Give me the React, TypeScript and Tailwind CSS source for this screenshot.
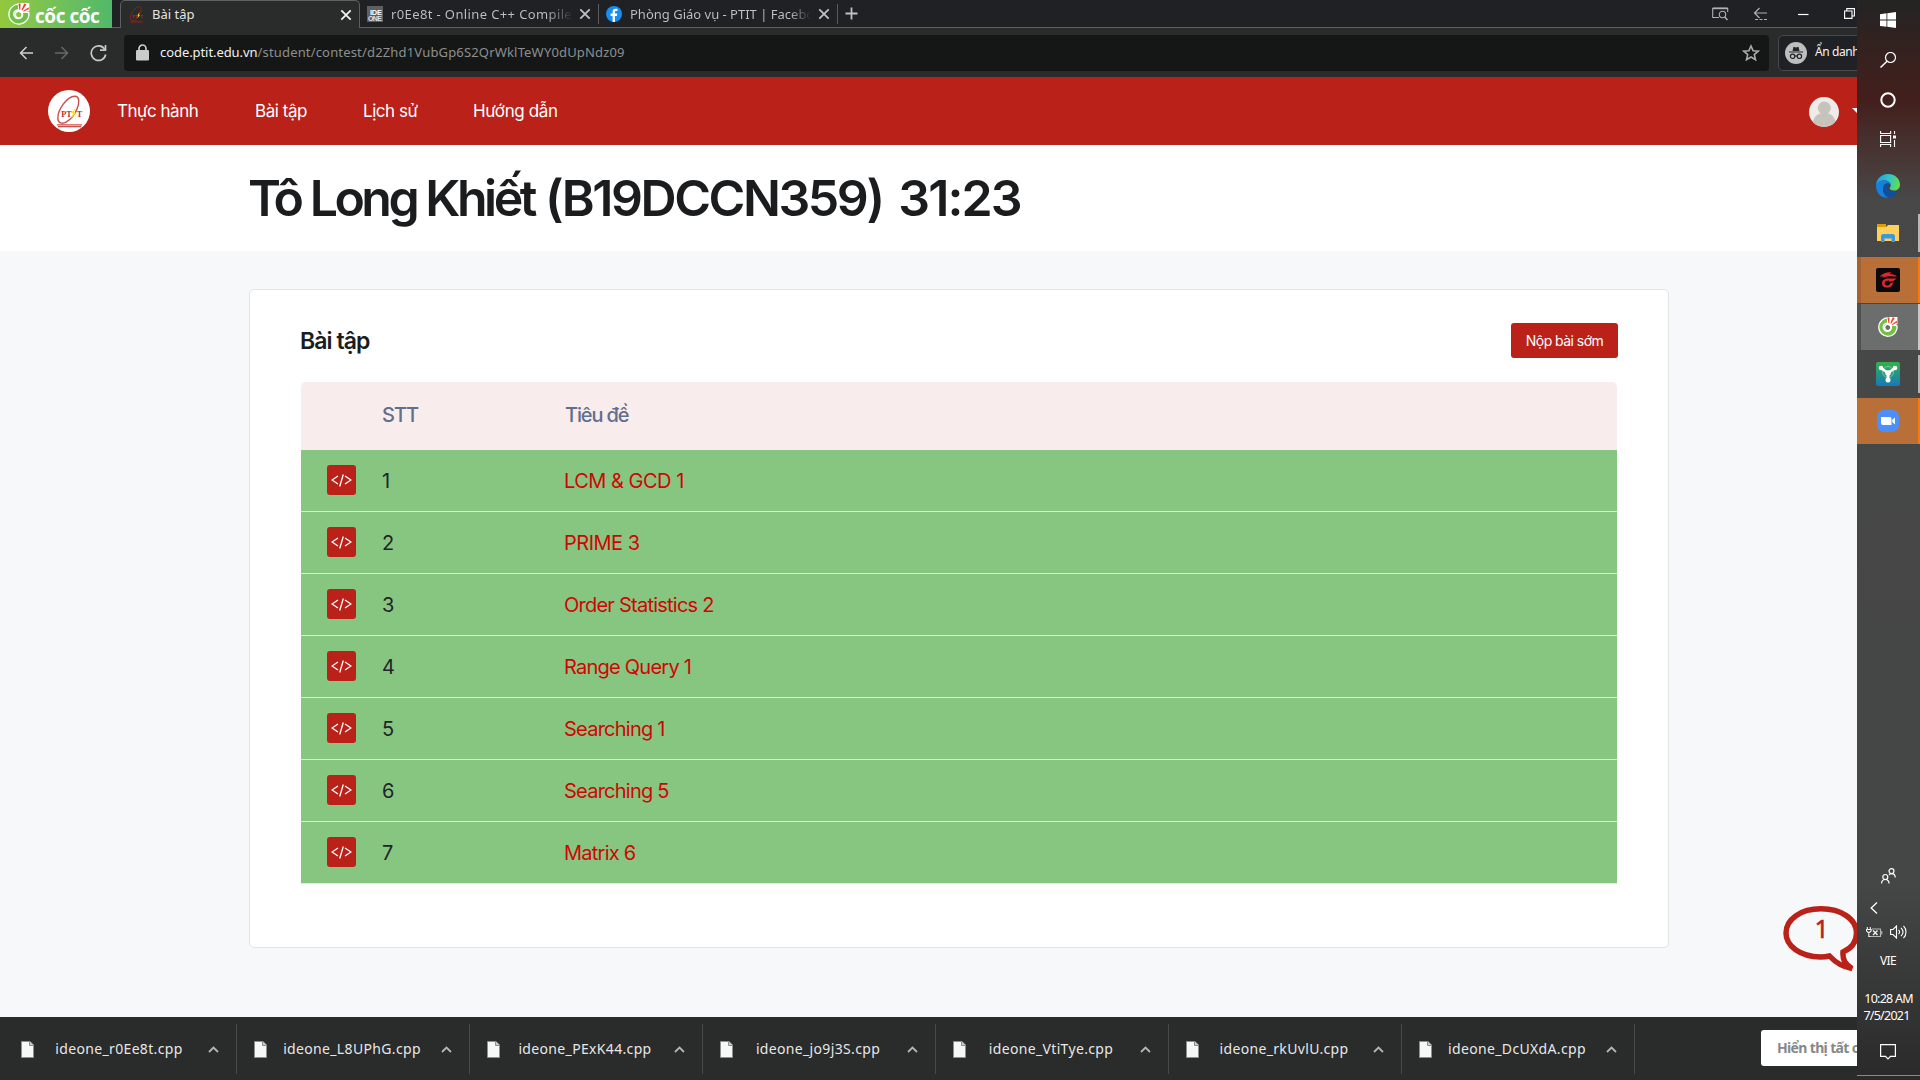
import React from "react";

const problems = [
  "LCM & GCD 1",
  "PRIME 3",
  "Order Statistics 2",
  "Range Query 1",
  "Searching 1",
  "Searching 5",
  "Matrix 6",
];

const downloads = [
  "ideone_r0Ee8t.cpp",
  "ideone_L8UPhG.cpp",
  "ideone_PExK44.cpp",
  "ideone_jo9j3S.cpp",
  "ideone_VtiTye.cpp",
  "ideone_rkUvlU.cpp",
  "ideone_DcUXdA.cpp",
];

function Close({ className }: { className: string }) {
  return (
    <svg className={className} width="12" height="12" viewBox="0 0 12 12" fill="none" stroke="currentColor" strokeWidth="1.8">
      <path d="M1.3 1.3l9.4 9.4M10.7 1.3L1.3 10.7" />
    </svg>
  );
}

function CocCocMark({ size, ring }: { size: number; ring: string }) {
  return (
    <svg className="shrink-0" width={size} height={size} viewBox="0 0 24 24" fill="none">
      <path d="M13 2.2A10 10 0 1 0 21.8 10.6L14.6 9.6A4.4 4.4 0 1 1 12.6 8.1Z" fill={ring} stroke="#fff" strokeWidth="1.3" />
      <circle cx="11.8" cy="12.6" r="3.6" stroke="#fff" strokeWidth="1.8" />
      <path d="M10.5 1h11.8v8l-7.6 2.4-3.2-2z" fill="#fff" />
      <path d="M11.4 1.4l2.2.1-.3 6.200h-.9zM17.200 1.400l2.200.8-3.900 6.200-1-.5zM21.600 5.200l.4 1.900-5.400 2.700-.4-.9z" fill="#e8442e" />
    </svg>
  );
}

function PtitMark({ size, muted }: { size: number; muted?: boolean }) {
  return (
    <svg className="shrink-0" width={size} height={size} viewBox="0 0 34 34" fill="none">
      <g stroke={muted ? "#a51f1c" : "#c9504c"}>
        <path d="M24.500 15C27.500 8 27.500 1.200 22.500 1.200C14.500 1.200 5 15 5 23.500C5 29.500 9.500 30 13.500 28C18 25.500 22 21 24.500 15" strokeWidth="1.500" />
        <path d="M4 30.700h26M5 32.500h24" strokeWidth="1.200" />
      </g>
      <text x="8.500" y="23" fontSize="8.500" fontWeight="700" fontFamily="Liberation Serif, serif" fill={muted ? "#b92b20" : "#c22a25"}>
        PT
      </text>
      <text x="24.500" y="23" fontSize="8.500" fontWeight="700" fontFamily="Liberation Serif, serif" fill={muted ? "#b92b20" : "#c22a25"}>
        T
      </text>
      <path d="M24 12l-5.500 6.500 2.200.6-2 5.400 5-6.200-2.200-.8z" fill="#ffe22c" />
    </svg>
  );
}

function TabStrip() {
  return (
    <div className="flex h-7 bg-[#202124]">
      <div className="flex h-7 w-[112px] shrink-0 items-center bg-linear-to-r from-[#93c83d] to-[#4fb96a] pl-[7px]">
        <CocCocMark size={24} ring="#6fbf4a" />
        <span className="mt-1 ml-1 font-['Open_Sans',sans-serif] text-[19px] leading-6 font-bold tracking-[-0.45px] whitespace-nowrap text-white">
          cốc cốc
        </span>
      </div>
      <div className="w-2 border-b border-[#5f6062]" />
      <div className="flex h-7 w-[240px] items-center rounded-t-[5px] border-x border-t border-[#5f6062] bg-[#2a2b2b] pl-[7px]">
        <PtitMark size={17} muted />
        <span className="-mt-px ml-[7px] text-[13px] leading-5 text-[#e4e5e6]">Bài tập</span>
        <Close className="mr-[7px] ml-auto text-[#f2f2f2]" />
      </div>
      <div className="flex h-7 grow items-center border-b border-[#5f6062] pl-[7px] text-[#bfc1c3]">
        <svg width="16" height="16" viewBox="0 0 16 16">
          <rect width="16" height="16" fill="#5d5f61" />
          <text x="3" y="9" textLength="12" fontSize="7.5" fontWeight="700" fontFamily="Liberation Sans, sans-serif" fill="#fff">IDE</text>
          <text x="1" y="15.4" textLength="14" fontSize="7" fontWeight="700" fontFamily="Liberation Sans, sans-serif" fill="#e0e0e0">ONE</text>
        </svg>
        <span className="ml-2 w-[182px] overflow-hidden bg-linear-to-r from-[#bfc1c3] from-85% to-transparent bg-clip-text text-[13px] leading-5 tracking-[0.38px] whitespace-nowrap text-transparent">
          r0Ee8t - Online C++ Compiler
        </span>
        <Close className="ml-1.5" />
        <div className="ml-[7px] h-5 w-px bg-[#5a5b5e]" />
        <svg className="ml-[7px]" width="16" height="16" viewBox="0 0 16 16">
          <circle cx="8" cy="8" r="8" fill="#168df2" />
          <path d="M8.9 16V9.9h2l.4-2.3H8.9V6.2c0-.8.3-1.3 1.4-1.3h1.1V2.8C10.900 2.700 10.300 2.700 9.700 2.700 7.700 2.700 6.600 3.800 6.600 5.900v1.700H4.600v2.300h2V16z" fill="#fff" />
        </svg>
        <span className="ml-2 w-[181px] overflow-hidden bg-linear-to-r from-[#bfc1c3] from-88% to-transparent bg-clip-text text-[13px] leading-5 whitespace-nowrap text-transparent">
          Phòng Giáo vụ - PTIT | Facebook
        </span>
        <Close className="ml-[7px]" />
        <div className="ml-[7px] h-5 w-px bg-[#5a5b5e]" />
        <svg className="ml-[7px]" width="13" height="13" viewBox="0 0 13 13" stroke="currentColor" strokeWidth="1.8">
          <path d="M6.500 .5v12M.5 6.500h12" />
        </svg>
        <div className="mr-[2px] ml-auto flex items-center">
          <svg width="17" height="14" viewBox="0 0 17 14" fill="none" stroke="#aeb0b2" strokeWidth="1.1">
            <path d="M7 10.500H.7V1.500h15V5" />
            <path d="M.7 1.300h15" strokeWidth="1.800" />
            <circle cx="10.500" cy="7.500" r="3.200" />
            <path d="M12.700 9.900l2.800 3" strokeWidth="1.500" />
          </svg>
          <svg className="ml-6" width="16" height="14" viewBox="0 0 16 14" fill="none" stroke="#aeb0b2" strokeWidth="1.200">
            <path d="M14 6H1.500M6.500 1L1.500 6l5 5" />
            <path d="M2 12.500h13" strokeDasharray="3 1.500" />
          </svg>
          <svg className="ml-[29px]" width="11" height="10" viewBox="0 0 11 10" stroke="#fff" strokeWidth="1.200">
            <path d="M0 5.500h10.500" />
          </svg>
          <svg className="ml-[35px]" width="11" height="11" viewBox="0 0 11 11" fill="none" stroke="#fff" strokeWidth="1.100">
            <path d="M.6 3h7.400v7.400H.6zM2.800 3V.6h7.600V8H8" />
          </svg>
        </div>
      </div>
    </div>
  );
}

function AddressBar() {
  return (
    <div className="flex h-[49px] items-center bg-[#2a2b2b] pl-[19px]">
      <svg className="shrink-0" width="15" height="14" viewBox="0 0 15 14" fill="none" stroke="#d0d1d2" strokeWidth="1.500">
        <path d="M14 7H1.500M7.500 1l-6 6 6 6" />
      </svg>
      <svg className="ml-[21px] shrink-0" width="15" height="14" viewBox="0 0 15 14" fill="none" stroke="#66686a" strokeWidth="1.500">
        <path d="M0 7h12.500M6.500 1l6 6-6 6" />
      </svg>
      <svg className="ml-5 shrink-0" width="18" height="18" viewBox="0 0 18 18" fill="none" stroke="#c6c7c8" strokeWidth="1.700">
        <path d="M14.700 5.200A7.300 7.300 0 1 0 15.700 10.500" />
        <path d="M15.500 1v5.200h-5.500" />
      </svg>
      <div className="ml-4 flex h-9 w-[1645px] shrink-0 items-center rounded-[4px] bg-[#151716] pl-3">
        <svg width="13" height="17" viewBox="0 0 13 17" fill="none">
          <path d="M3 8V4.500a3.500 3.500 0 0 1 7 0V8" stroke="#cacbcb" strokeWidth="1.700" />
          <rect y="6" width="13" height="10.500" rx="1.300" fill="#cacbcb" />
        </svg>
        <span className="-mt-px ml-[11px] text-[13px] leading-5 tracking-[-0.07px] text-[#f0f1f1]">code.ptit.edu.vn</span>
        <span className="-mt-px text-[13px] leading-5 tracking-[0.17px] text-[#8d8f8e]">
          /student/contest/d2Zhd1VubGp6S2QrWklTeWY0dUpNdz09
        </span>
        <svg className="mr-[9px] ml-auto" width="18" height="17" viewBox="0 0 18 17" fill="none" stroke="#a9abaa" strokeWidth="1.600">
          <path d="M9 2l2.100 4.700 5.100.5-3.900 3.400 1.200 5.100L9 13l-4.500 2.700 1.200-5.100L1.800 7.200l5.100-.5z" />
        </svg>
      </div>
      <div className="ml-[9px] flex h-9 w-[110px] shrink-0 items-center rounded-[5px] border border-[#47494b] bg-[#202124] pl-1.5">
        <svg className="shrink-0" width="22" height="22" viewBox="0 0 22 22" fill="none">
          <circle cx="11" cy="11" r="11" fill="#bdbebf" />
          <path d="M7.500 9l1-4.300 2.500.7 2.500-.7 1 4.300zM4 9.600h14v1H4z" fill="#232426" />
          <g stroke="#232426" strokeWidth="1.200">
            <circle cx="7.600" cy="14.300" r="2.200" />
            <circle cx="14.400" cy="14.300" r="2.200" />
            <path d="M9.800 14h2.400" />
          </g>
        </svg>
        <span className="-mt-0.5 ml-2 text-[12px] leading-5 tracking-[-0.4px] whitespace-nowrap text-[#f4f4f4]">Ẩn danh</span>
      </div>
    </div>
  );
}

function SiteNav() {
  return (
    <nav className="flex h-[68px] items-center bg-[#ba2119] pl-12 font-['Inter',sans-serif] text-[17px] leading-6 whitespace-nowrap text-white">
      <div className="flex size-[42px] shrink-0 items-center justify-center rounded-full bg-white">
        <PtitMark size={33} />
      </div>
      <span className="ml-[27px] w-[138px] tracking-[-0.5px]">Thực hành</span>
      <span className="w-[108px] tracking-[-0.45px]">Bài tập</span>
      <span className="w-[110px] tracking-[-0.45px]">Lịch sử</span>
      <span className="tracking-[-0.36px]">Hướng dẫn</span>
      <svg className="mt-0.5 ml-auto" width="30" height="30" viewBox="0 0 30 30">
        <clipPath id="avatar">
          <circle cx="15" cy="15" r="15" />
        </clipPath>
        <g clipPath="url(#avatar)">
          <rect width="30" height="30" fill="#eeece8" />
          <circle cx="15.300" cy="11" r="6.500" fill="#c6c3bd" />
          <path d="M3.500 30C3.500 20 8 16 15.300 16S27 20 27 30z" fill="#c6c3bd" />
        </g>
      </svg>
      <svg className="-mt-0.5 ml-[13px]" width="5" height="6" viewBox="0 0 5 6">
        <path d="M0 1h10L5 6z" fill="#fff" />
      </svg>
    </nav>
  );
}

function ContestCard() {
  return (
    <section className="ml-[249px] h-[659px] w-[1420px] rounded-[5px] border border-[#e1e4e8] bg-white px-[51px] pt-[33px]">
      <div className="flex items-center justify-between">
        <h2 className="-ml-px text-[23px] leading-8 font-semibold tracking-[-0.95px] text-[#1b1c1e]">Bài tập</h2>
        <button className="-mr-px h-[35px] w-[107px] rounded-[3px] bg-[#ba2119] text-[14px] leading-5 tracking-[-0.55px] whitespace-nowrap text-white">
          Nộp bài sớm
        </button>
      </div>
      <div className="mt-6 overflow-hidden rounded-t-[5px]">
        <div className="grid h-[68px] grid-cols-[81px_183px_1fr] items-center bg-[#f9ecec] pb-0.5 text-[20px] font-medium text-[#5f6f8c]">
          <span />
          <span className="tracking-[-1px]">STT</span>
          <span className="tracking-[-1.15px]">Tiêu đề</span>
        </div>
        {problems.map((name, i) => (
          <div
            key={name}
            className="grid h-[62px] grid-cols-[81px_183px_1fr] items-center border-b border-[#dfe8e0] bg-[#87c681] text-[20px] leading-7"
          >
            <span className="-mt-px ml-[26px] flex h-[30px] w-[29px] items-center justify-center rounded-[3px] bg-[#ba2119]">
              <svg width="21" height="13" viewBox="0 0 21 13" fill="none" stroke="#fff" strokeWidth="1.300">
                <path d="M7 2L1 6l6 4M14 2l6 4-6 4M12.300 .500L8.700 12.500" />
              </svg>
            </span>
            <span className="text-[#212529]">{i + 1}</span>
            <span className={`-ml-px text-[#d40404] ${i < 2 ? "tracking-[-0.5px]" : "tracking-[-0.76px]"}`}>{name}</span>
          </div>
        ))}
      </div>
    </section>
  );
}

function ChatBubble() {
  return (
    <svg className="absolute top-[905px] left-[1783px]" width="74" height="68" viewBox="0 0 74 68" fill="none">
      <path
        d="M46.500 51C43.500 51.800 40 52 37.500 52C17 51.500 3 41 3 28C3 14 18 3.800 38 3.800C58 3.800 73.500 14 73.500 28C73.500 36 69 43 60 47C59.500 55 62 59 69 63.500C60 62 53 58 46.500 51Z"
        stroke="#ba2119"
        strokeWidth="5.500"
      />
      <text x="31.500" y="32.500" fontSize="25" fontFamily="Noto Sans, sans-serif" fill="#ba2119" stroke="#ba2119" strokeWidth="0.500">
        1
      </text>
    </svg>
  );
}

function DownloadBar() {
  return (
    <div className="flex h-[63px] bg-[#2a2b2b] pt-[7px]">
      {downloads.map((name, i) => (
        <div
          key={name}
          className={`flex h-[50px] shrink-0 items-center border-r border-[#484a4a] ${i === 0 ? "w-[237px] pl-[22px]" : "w-[233px] pl-[18px]"}`}
        >
          <svg className="-ml-px" width="13" height="17" viewBox="0 0 13 17" fill="#f6f8f8" stroke="#8c8f8f">
            <path d="M.5 .5h8.500l3.500 3.500v12.500H.5z" />
            <path d="M8.500 .5v4h4" fill="#c9cdcd" />
          </svg>
          <span className="ml-[10px] w-[150px] text-center text-[14px] leading-5 tracking-[0.34px] whitespace-nowrap text-[#e6e8e8]">
            {name}
          </span>
          <svg className="ml-[14px]" width="11" height="7" viewBox="0 0 11 7" fill="none" stroke="#b4b6b6" strokeWidth="1.800">
            <path d="M1 6l4.500-4.500L10 6" />
          </svg>
        </div>
      ))}
      <div className="mt-1.5 ml-[126px] flex h-9 w-[130px] shrink-0 items-center rounded-[3px] bg-white pl-4 text-[14px] leading-5 font-bold tracking-[-0.65px] whitespace-nowrap text-[#868888]">
        Hiển thị tất cả
      </div>
    </div>
  );
}

const stroke = { fill: "none", stroke: "#fff" };

function Taskbar() {
  return (
    <aside className="flex w-[63px] shrink-0 flex-col items-center overflow-hidden bg-linear-to-b from-[#484848] via-[#454646] via-82% to-[#2a2a2a] text-white">
      <div className="flex h-[200px] w-full shrink-0 flex-col items-center bg-linear-to-b from-[#242323] via-[#431f1c] via-50% to-[#484848] pr-px">
        <svg className="mt-3" width="16" height="16" viewBox="0 0 16 16" fill="#fff">
          <path d="M0 2.200l6.500-.9v6.200H0zM7.300 1.200L16 0v7.500H7.300zM0 8.500h6.500v6.300L0 13.900zM7.300 8.500H16V16l-8.700-1.200z" />
        </svg>
        <svg className="mt-6" width="16" height="16" viewBox="0 0 16 16" {...stroke} strokeWidth="1.200">
          <circle cx="10.500" cy="5.500" r="5" />
          <path d="M7 9.200L.5 15.500" strokeWidth="1.500" />
        </svg>
        <svg className="mt-6" width="16" height="16" viewBox="0 0 16 16" {...stroke} strokeWidth="2">
          <circle cx="8" cy="8" r="6.700" />
        </svg>
        <svg className="mt-[23px]" width="16" height="16" viewBox="0 0 16 16" {...stroke} strokeWidth="1.100">
          <path d="M.6 0v2.500h10V0M.6 16v-2.500h10V16M.6 4.500h10v7H.6zM14.500 0v3M14.500 9v7" />
          <path d="M13 4.500h3v3h-3z" fill="#fff" stroke="none" />
        </svg>
        <svg className="mt-[27px] shrink-0" width="24" height="24" viewBox="0 0 24 24">
          <defs>
            <linearGradient id="edgeTop" x1="0" x2="1" y1="0.300" y2="0.500">
              <stop offset="0" stopColor="#1c9de0" />
              <stop offset=".5" stopColor="#31c3cf" />
              <stop offset="1" stopColor="#64dd4b" />
            </linearGradient>
          </defs>
          <path d="M0 12C0 5 5 0 12 0s12 5 12 10.500c0 4-3 6-6 6-2.500 0-4.500-1-4.500-2.200 0-.8 1.200-1 1.200-3C14.700 8 11.500 6.500 8.500 6.500 4 6.500 1 9 0 12z" fill="url(#edgeTop)" />
          <path d="M0 12c.3-3.500 3.500-5.800 7.500-5.800 4.500 0 7.200 2.300 7.200 5-.5-1.500-2-2-3.200-2-3 0-5 3-4.500 6.500.5 4 4 7.500 8.300 7.300C7.500 26 0 20.500 0 12z" fill="#1482dc" />
          <path d="M7 15.500c0-3 1.700-5.700 4.200-6.200.8 0 1.300.2 2 .7-1.700 1-1.700 3-.6 5 2 3.300 6 3.300 9.800 1.500-1.500 4-5 7-9 7.400C9.500 23.500 7 19.500 7 15.500z" fill="#104f9c" />
        </svg>
      </div>
      <div className="mt-[14px] flex h-[43px] w-full justify-end">
        <svg className="mt-[10px] mr-[18px]" width="24" height="18" viewBox="0 0 24 18">
          <path d="M1 0h9v5H1z" fill="#e09c00" />
          <path d="M1 3h9l2-2h11v16H1z" fill="#ffd15c" />
          <path d="M5 18v-6.500L6.500 10h11l1.500 1.500V18h-3.500v-3.500h-7V18z" fill="#3b97de" />
        </svg>
        <div className="h-[38px] w-[2px] bg-[#b6b6b6]" />
      </div>
      <div className="flex h-[46px] w-full items-center border-r-2 border-l-4 border-r-[#ff7900] border-l-[#a36230] bg-[#b87038]">
        <svg className="ml-[15px]" width="24" height="24" viewBox="0 0 24 24">
          <rect width="24" height="24" rx="2" fill="#0b0909" />
          <path d="M3.500 8.500C7 5 11 3.800 15.500 4.200L13.500 6C17 6 20 7 21 8.500L13 8.200C10 8.200 7 9 5.500 11L7.500 8.500Z" fill="#e0272c" />
          <path d="M20.500 10.500C18.500 13 16 13.600 12.500 13.800L13.500 12.600C10 12.500 8.600 13.500 8.600 15.500C8.600 17.300 10 17.600 11.500 17.400C13 17.200 14 16.400 14.500 15L17 14.200C16.800 17.500 14.500 19.500 11 19.600C8 19.600 6 18 6 15.400C6 12 9 10.500 12.500 10.500Z" fill="#e0272c" />
        </svg>
      </div>
      <div className="mt-px flex h-[46px] w-full items-center border-r-2 border-l-4 border-r-[#c8c8c8] border-l-[#515252] bg-[#6c6d6d]">
        <div className="ml-4">
          <CocCocMark size={22} ring="#75c043" />
        </div>
      </div>
      <div className="flex h-12 w-full items-center justify-end">
        <svg className="mr-[18px]" width="24" height="24" viewBox="0 0 24 24">
          <defs>
            <linearGradient id="tri" x1="0" x2="0" y1="0" y2="1">
              <stop stopColor="#33b14a" />
              <stop offset="1" stopColor="#1878bd" />
            </linearGradient>
          </defs>
          <rect width="24" height="24" rx="2" fill="url(#tri)" />
          <circle cx="12" cy="10" r="5.500" fill="none" stroke="#8fd0a3" strokeWidth=".8" />
          <path d="M5 6l7 5 7-5M12 11v8" fill="none" stroke="#fff" strokeWidth="2.700" />
          <g fill="#fff">
            <circle cx="5" cy="6" r="2.300" />
            <circle cx="19" cy="6" r="2.300" />
            <circle cx="12" cy="18" r="2.500" />
            <circle cx="12" cy="11" r="2.800" />
          </g>
        </svg>
        <div className="h-[38px] w-[2px] bg-[#b6b6b6]" />
      </div>
      <div className="flex h-[46px] w-full items-center border-r-2 border-[#ff7900] bg-[#b87038]">
        <svg className="ml-5" width="22" height="22" viewBox="0 0 22 22">
          <rect width="22" height="22" rx="7" fill="#4c8ffb" />
          <path d="M4 7h8.500a2 2 0 0 1 2 2v6H6a2 2 0 0 1-2-2zM15.300 9.800L18 7.500v7l-2.700-2.300z" fill="#fff" />
        </svg>
      </div>

      <svg className="mt-[424px] mr-px" width="15" height="16" viewBox="0 0 15 16" {...stroke} strokeWidth="1.200">
        <circle cx="4.300" cy="9" r="2.500" />
        <path d="M.6 15.500c0-2.500 1.500-4 3.700-4s3.700 1.500 3.700 4" />
        <circle cx="10.500" cy="3.100" r="2.500" />
        <path d="M8 7c.7-.9 1.500-1.300 2.500-1.300 2.200 0 3.700 1.500 3.700 3.800" />
      </svg>
      <svg className="mt-[18px] mr-[30px]" width="8" height="12" viewBox="0 0 8 12" {...stroke} strokeWidth="1.300">
        <path d="M7 .5L1.200 6 7 11.500" />
      </svg>
      <div className="mt-[11px] mr-[5px] flex items-center gap-[7px]">
        <svg width="17" height="13" viewBox="0 0 17 13" fill="none" stroke="#f2f2f2" strokeWidth="1.100">
          <path d="M1.300 1v2M4.300 1v2M.5 3.500h4.600v1.500L2.800 7 .5 5zM2.800 7v3.500h2" />
          <path d="M6 3h8.500v7.500H4.500M15.800 5v3.500" stroke="#b5b5b5" />
          <path d="M7 4.500l4.500 4.500M11.500 4.500L7 9" strokeWidth="1.400" />
        </svg>
        <svg width="17" height="14" viewBox="0 0 17 14" {...stroke} strokeWidth="1.100">
          <path d="M.6 4.500h2.400l3.500-3.500v12L3 9.500H.6zM8.500 4.800c1.300 1.300 1.300 3.100 0 4.400M11 2.800c2.400 2.500 2.400 5.900 0 8.400M13.500.8c3.300 3.500 3.300 8.900 0 12.400" />
        </svg>
      </div>
      <span className="mt-[14px] mr-px text-[12px] leading-4 tracking-[-0.6px]">VIE</span>
      <div className="mt-[21px] flex flex-col items-center text-[12.500px] leading-[17px] tracking-[-0.75px] whitespace-nowrap">
        <span>10:28 AM</span>
        <span className="-ml-1">7/5/2021</span>
      </div>
      <svg className="mt-[20px] mr-px shrink-0" width="16" height="16" viewBox="0 0 16 16" {...stroke} strokeWidth="1.200">
        <path d="M.6 .6h14.800v11.800H10.500L8 15l-2.500-2.600H.6z" />
      </svg>
      <div className="mt-auto mb-1 h-px w-full shrink-0 bg-[#8a8a8a]" />
    </aside>
  );
}

export default function App() {
  return (
    <div className="relative flex h-[1080px] w-[1920px] overflow-hidden font-['Noto_Sans',sans-serif]">
      <div className="flex w-[1857px] shrink-0 flex-col overflow-hidden">
        <TabStrip />
        <AddressBar />
        <SiteNav />
        <main className="flex grow flex-col bg-[#f7f8fa] font-['Inter',sans-serif]">
          <header className="mb-[38px] h-[106px] bg-white pt-[22px] pl-[248px]">
            <h1 className="text-[50px] leading-[62px] font-semibold tracking-[-2.45px] whitespace-nowrap text-[#1b1c1e]">
              <span className="tracking-[-3.5px]">Tô Long Khiết </span>
              <span className="ml-0.5">(B19DCCN359)</span>
              <span className="ml-[5px] tracking-[-1.9px]"> 31:23</span>
            </h1>
          </header>
          <ContestCard />
        </main>
        <DownloadBar />
      </div>
      <Taskbar />
      <ChatBubble />
    </div>
  );
}
